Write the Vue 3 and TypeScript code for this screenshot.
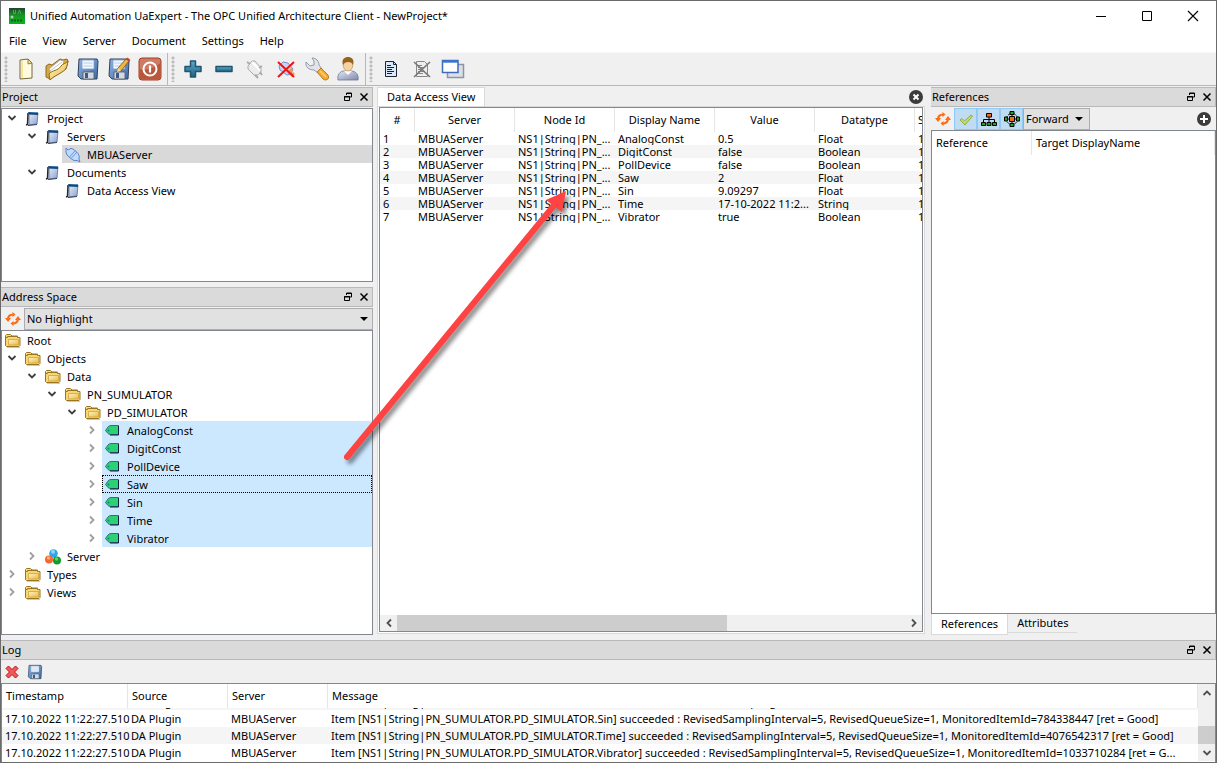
<script setup lang="ts">
import { onMounted, ref } from 'vue'

interface TreeNode {
  label: string
  level: number
  icon: string
  state?: 'open' | 'closed'
  mark?: 'grey' | 'blue'
  focus?: boolean
}

const menus = ['File', 'View', 'Server', 'Document', 'Settings', 'Help']

const toolbars = [
  [
    { id: 'new', label: 'New project' },
    { id: 'open', label: 'Open project' },
    { id: 'save', label: 'Save project' },
    { id: 'saveas', label: 'Save project as' },
    { id: 'power', label: 'Exit' },
  ],
  [
    { id: 'plus', label: 'Add server' },
    { id: 'minus', label: 'Remove server' },
    { id: 'plug', label: 'Connect server' },
    { id: 'unplug', label: 'Disconnect server' },
    { id: 'wrench', label: 'Server properties' },
    { id: 'user', label: 'Change user' },
  ],
  [
    { id: 'doc', label: 'Add document' },
    { id: 'nodoc', label: 'Remove document' },
    { id: 'windows', label: 'Windows' },
  ],
]

const projectTree: TreeNode[] = [
  { label: 'Project', level: 1, icon: 'box', state: 'open' },
  { label: 'Servers', level: 2, icon: 'box', state: 'open' },
  { label: 'MBUAServer', level: 3, icon: 'link', mark: 'grey' },
  { label: 'Documents', level: 2, icon: 'box', state: 'open' },
  { label: 'Data Access View', level: 3, icon: 'box' },
]

const tags = ['AnalogConst', 'DigitConst', 'PollDevice', 'Saw', 'Sin', 'Time', 'Vibrator']

const addressTree: TreeNode[] = [
  { label: 'Root', level: 0, icon: 'folder' },
  { label: 'Objects', level: 1, icon: 'folder', state: 'open' },
  { label: 'Data', level: 2, icon: 'folder', state: 'open' },
  { label: 'PN_SUMULATOR', level: 3, icon: 'folder', state: 'open' },
  { label: 'PD_SIMULATOR', level: 4, icon: 'folder', state: 'open' },
  ...tags.map((label): TreeNode => ({
    label, level: 5, icon: 'tag', state: 'closed', mark: 'blue', focus: label === 'Saw',
  })),
  { label: 'Server', level: 2, icon: 'balls', state: 'closed' },
  { label: 'Types', level: 1, icon: 'folder', state: 'closed' },
  { label: 'Views', level: 1, icon: 'folder', state: 'closed' },
]

const values = ['0.5', 'false', 'false', '2', '9.09297', '17-10-2022 11:2...', 'true']
const types = ['Float', 'Boolean', 'Boolean', 'Float', 'Float', 'String', 'Boolean']
const dataHead = ['#', 'Server', 'Node Id', 'Display Name', 'Value', 'Datatype', 'S']
const dataRows = tags.map((tag, i) => [
  String(i + 1), 'MBUAServer', 'NS1|String|PN_...', tag, values[i], types[i], '1',
])

const logRows = [
  ['Saw', '2075865447 [ret = Good]'],
  ['Sin', '784338447 [ret = Good]'],
  ['Time', '4076542317 [ret = Good]'],
  ['Vibrator', '1033710284 [ret = G...'],
].map(([name, tail]) => [
  '17.10.2022 11:22:27.510', 'DA Plugin', 'MBUAServer',
  `Item [NS1|String|PN_SUMULATOR.PD_SIMULATOR.${name}] succeeded : RevisedSamplingInterval=5, RevisedQueueSize=1, MonitoredItemId=${tail}`,
])

const highlight = ref('No Highlight')
const direction = ref('Forward')
const logView = ref<HTMLElement | null>(null)

onMounted(() => {
  if (logView.value) logView.value.scrollTop = logView.value.scrollHeight
})
</script>

<template>
  <div class="window">
    <svg class="defs" aria-hidden="true">
      <defs>
        <linearGradient id="g-gold" x1="0" y1="0" x2="1" y2="1"><stop offset="0" stop-color="#fff6c4" /><stop offset="1" stop-color="#e9b94a" /></linearGradient>
        <linearGradient id="g-blue" x1="0" y1="0" x2="1" y2="1"><stop offset="0" stop-color="#8fb4e0" /><stop offset="1" stop-color="#3f6ba8" /></linearGradient>
        <linearGradient id="g-box" x1="0" y1="0" x2="1" y2="1"><stop offset="0" stop-color="#e4ebf8" /><stop offset="1" stop-color="#8ba2d2" /></linearGradient>
        <linearGradient id="g-teal" x1="0" y1="0" x2="0" y2="1"><stop offset="0" stop-color="#62a8c8" /><stop offset="1" stop-color="#1d6285" /></linearGradient>
        <linearGradient id="g-green" x1="0" y1="0" x2="0" y2="1"><stop offset="0" stop-color="#23452b" /><stop offset=".5" stop-color="#159a25" /><stop offset="1" stop-color="#08b41b" /></linearGradient>
        <linearGradient id="g-body" x1="0" y1="0" x2="1" y2="1"><stop offset="0" stop-color="#e2e6f1" /><stop offset="1" stop-color="#7f89ad" /></linearGradient>
      </defs>
      <symbol id="i-new" viewBox="0 0 24 24">
        <path d="M6 3 14 2l4 4v15L6 22z" fill="#fffbe0" stroke="#75663a" />
        <path d="M7 4v17h2V4z" fill="#f7e79b" /><path d="M14 2v5l4-1z" fill="#f6df8d" stroke="#75663a" stroke-width=".8" />
      </symbol>
      <symbol id="i-open" viewBox="0 0 24 24">
        <path d="M1 9 4 7l3 1 8-6 3 1 4-1 1 2-2 8L5 22 1 20z" fill="#d7a83e" stroke="#8c6a1d" />
        <path d="M4 12 15 3l4 1-2 7-11 5z" fill="#fff" stroke="#999" stroke-width=".7" /><path d="m5 14 12-9" stroke="#aaa" stroke-width=".7" />
        <path d="M4 17c3-4 9-3 12-8 2-3 5-2 7-5-1 6-2 9-6 11-4 3-8 4-12 8z" fill="url(#g-gold)" stroke="#8c6a1d" />
      </symbol>
      <symbol id="i-save" viewBox="0 0 24 24">
        <path d="M3 2h18l1 2-1 18H5l-3-3z" fill="url(#g-blue)" stroke="#2f4259" />
        <path d="M6 3h12v9H6z" fill="#f2f7fd" stroke="#7da0c8" stroke-width=".8" /><path d="M7.500 6h9M7.500 9h9" stroke="#b9cde5" />
        <path d="M7 15h11v7H7z" fill="#d5d9df" stroke="#46566d" stroke-width=".8" /><path d="M9 16h3v5H9z" fill="#3c5a85" />
      </symbol>
      <symbol id="i-saveas" viewBox="0 0 24 24">
        <use href="#i-save" width="24" height="24" />
        <path d="m10 15 1-4 8-9 3 2-8 10z" fill="#f5b53a" stroke="#694f25" stroke-width=".8" /><path d="m19 2 1.500-1.500 3 2.500L22 4.500z" fill="#d33f2a" /><path d="m10 15 1-4 3 3z" fill="#f5dfb4" />
      </symbol>
      <symbol id="i-power" viewBox="0 0 24 24">
        <rect x="1" y="1" width="22" height="22" rx="3" fill="#cd7b63" stroke="#a43f29" />
        <path d="M1.500 12C9 14 16 11 22.500 6v14q0 2-2.500 2H4q-2.500 0-2.500-2z" fill="#b9563b" />
        <circle cx="12" cy="12" r="6.500" fill="none" stroke="#fff" stroke-width="2" /><path d="M12 8.500v7" stroke="#fff" stroke-width="2.200" />
      </symbol>
      <symbol id="i-plus" viewBox="0 0 24 24"><path d="M9.500 4h5v5.500H20v5h-5.500V20h-5v-5.500H4v-5h5.500z" fill="url(#g-teal)" stroke="#1f5672" stroke-width="1.500" stroke-linejoin="round" /></symbol>
      <symbol id="i-minus" viewBox="0 0 24 24"><path d="M4 9.500h16v5H4z" fill="url(#g-teal)" stroke="#1f5672" stroke-width="1.500" stroke-linejoin="round" /></symbol>
      <symbol id="i-plug" viewBox="0 0 24 24">
        <path d="m5 9 4-5h3l6 7v4l-3 3h-4l-6-6z" fill="#ececec" stroke="#aaa" /><path d="m9 5 8 8" stroke="#fff" stroke-width="2" />
        <path d="m16 11 3-2m-7 9 3 3M4 5l3 2M17 15l2 3" stroke="#aaa" stroke-width="2" />
      </symbol>
      <symbol id="i-unplug" viewBox="0 0 24 24">
        <path d="m5 9 4-4 5 1 5 6-2 5-4 1-7-5z" fill="#c9d4f4" stroke="#7b8ccc" /><path d="m14 16 4-4m-1 7 3-3" stroke="#f29b2a" stroke-width="2.500" />
        <path d="M4 5 20 20M20 5 4 20" stroke="#f2120d" stroke-width="2" />
      </symbol>
      <symbol id="i-wrench" viewBox="0 0 24 24">
        <path d="M7 1c4 0 7 3 7 7l3 4-4 4-4-3C4 13 0 10 1 5l4 4 4-1V4z" fill="#e1e5eb" stroke="#7d8794" stroke-width=".8" />
        <path d="m12 15 4-4 7 7q2 4-2 5-2 0-3-1z" fill="#f7a92b" stroke="#a66a16" stroke-width=".8" /><path d="m15 14 6 6" stroke="#ffd27a" stroke-width="1.500" />
      </symbol>
      <symbol id="i-user" viewBox="0 0 24 24">
        <path d="M2 23c-1-5 2-9 6-9h7c5 0 8 4 7 9z" fill="url(#g-body)" stroke="#6d7696" stroke-width=".8" /><path d="m8 14 4 4 4-4z" fill="#fff" />
        <ellipse cx="12" cy="8" rx="4.800" ry="6" fill="#f7d3a1" stroke="#b5843d" stroke-width=".6" /><path d="M7 8C5 2 9 0 12 0s7 2 5 8c-1-2-2-3-5-3-2 0-4 1-5 3z" fill="#95631e" />
      </symbol>
      <symbol id="i-doc" viewBox="0 0 24 24">
        <path d="M6.500 4.500h8l3 3v12h-11z" fill="#d9e8fb" stroke="#1d2733" /><path d="M14.500 4.500v3h3" fill="none" stroke="#1d2733" />
        <path d="M8 8.500h4m-4 2h7m-7 2h5m-5 2h7m-7 2h5" stroke="#17202c" />
      </symbol>
      <symbol id="i-nodoc" viewBox="0 0 24 24">
        <path d="M6.500 4.500h8l3 3v12h-11z" fill="#eee" stroke="#888" /><path d="M8 8.500h4m-4 2h7m-7 2h5m-5 2h7m-7 2h5" stroke="#888" />
        <path d="m4 5 16 15M20 5 4 20" stroke="#777" stroke-width="1.600" />
      </symbol>
      <symbol id="i-windows" viewBox="0 0 24 24">
        <path d="M6.500 7.500h16v13h-16z" fill="#dcdfe7" stroke="#8d94a6" stroke-width="1.500" />
        <path d="M1.500 3.500h15.500v12H1.500z" fill="#fff" stroke="#3f6cb9" stroke-width="1.500" /><path d="M1.500 4.500h15.500" stroke="#3a75d2" stroke-width="2.400" />
      </symbol>
      <symbol id="i-box" viewBox="0 0 16 16">
        <path d="m4 3 9-1-1 11-8 1z" fill="url(#g-box)" stroke="#5b6d92" stroke-width=".8" />
        <path d="m3 1 10 .5V4L4 3.500z" fill="#0d4a80" /><path d="m3 2-.5 11.500L1 14" fill="none" stroke="#1c2736" stroke-width="1.500" /><path d="m3 14.500 9-1" stroke="#33415c" />
      </symbol>
      <symbol id="i-link" viewBox="0 0 16 16">
        <path d="m1 1 2 2q3-3 6-.5l4 4q2 3 1 5.500l1 3-3-1.500q-3 1-5.500-1.500L2 8Q.5 5.500 1 1z" fill="#c2dafc" stroke="#5585cf" /><path d="m4.500 10 6-6.500M6 11.500 12 5" stroke="#5585cf" stroke-width=".8" />
      </symbol>
      <symbol id="i-folder" viewBox="0 0 16 16">
        <path d="M.5 12.500v-10l1-1h4l1.500 1.500h5.500v2" fill="#f7df86" stroke="#9a751f" />
        <path d="M.5 12.500v-8h2v-1h10v1h2.500v8l-1 1H1.500z" fill="#f6d774" stroke="#9a751f" /><path d="M3.500 6.500h10v5.500h-10z" fill="url(#g-gold)" stroke="#d0a23b" stroke-width=".8" />
        <path d="M2 14.500h13" stroke="#bbb" stroke-width=".8" />
      </symbol>
      <symbol id="i-tag" viewBox="0 0 16 16">
        <path d="M.5 7.500 3 4q1-1.500 3-1.500h7.500v9H6q-2 0-3-1z" fill="#2bd274" stroke="#3b6a86" /><path d="M13.500 3v9H5" fill="none" stroke="#0d1f43" /><circle cx="3.500" cy="7.500" r="1" fill="#127f8a" />
      </symbol>
      <symbol id="i-balls" viewBox="0 0 16 16">
        <circle cx="8.500" cy="4.500" r="4.300" fill="#2fa4ea" /><circle cx="8" cy="2.800" r="2" fill="#8cd6fb" />
        <circle cx="4" cy="10.500" r="4" fill="#ef6a2d" /><circle cx="3.500" cy="9" r="1.700" fill="#f9a983" />
        <circle cx="12" cy="11.500" r="4" fill="#149a2c" /><circle cx="11.500" cy="10" r="1.700" fill="#5ed067" />
      </symbol>
      <symbol id="i-refresh" viewBox="0 0 16 16">
        <path d="M3 8.500C3 5 5.500 3.500 8.500 3.500M13 7.500C13 11 10.500 12.500 7.500 12.500" fill="none" stroke="#ff6a13" stroke-width="2.200" />
        <path d="m0 7 3 4L6 7zM16 9l-3-4-3 4zM7.500 1v5l3-2.500zM8.500 10v5l-3-2.500z" fill="#ff6a13" />
      </symbol>
      <symbol id="i-check" viewBox="0 0 16 16"><path d="m2 9 2-1.500 2.500 2.500L13 4l1.500 1L7 14z" fill="#c4dd5b" stroke="#83a03a" stroke-width=".8" /></symbol>
      <symbol id="i-hier" viewBox="0 0 16 16">
        <path d="M8 6v5M2.500 11V8.500h11V11" fill="none" stroke="#000" /><path d="M5.500 2.500h5v3.500h-5z" fill="#f56a1c" stroke="#000" />
        <path d="M.5 11.500h4v3h-4zM6 11.500h4v3H6zM11.500 11.500h4v3h-4z" fill="#17a81e" stroke="#000" />
      </symbol>
      <symbol id="i-net" viewBox="0 0 16 16">
        <circle cx="8" cy="8" r="5.500" fill="none" stroke="#000" stroke-dasharray="2 1" /><path d="M8 1v14M1 8h14" stroke="#000" />
        <path d="M5.500 5.500h5v5h-5z" fill="#f56a1c" stroke="#000" />
        <path d="M6 .5h4v3H6zM6 12.500h4v3H6zM.5 6h3v4h-3zM12.500 6h3v4h-3z" fill="#17a81e" stroke="#000" />
      </symbol>
      <symbol id="i-clear" viewBox="0 0 16 16"><path d="m4.500 2 3.500 3.500L11.500 2 14 4.500 10.500 8l3.500 3.500-2.500 2.500L8 10.500 4.500 14 2 11.500 5.500 8 2 4.500z" fill="#f4585a" stroke="#b51217" /></symbol>
      <symbol id="i-float" viewBox="0 0 10 10"><path d="M3.500 3V1h5v4H6.500M3 1.500h6M1.500 4.500h5v4h-5zM1 5h6" fill="none" stroke="#000" /></symbol>
      <symbol id="i-close" viewBox="0 0 10 10"><path d="m1.500 1.500 7 7m0-7-7 7" stroke="#000" stroke-width="1.500" /></symbol>
      <symbol id="i-chev" viewBox="0 0 10 10"><path d="M1.500 3 5 6.500 8.500 3" fill="none" stroke="currentColor" stroke-width="1.800" /></symbol>
      <symbol id="i-app" viewBox="0 0 16 16">
        <path d="M0 0h16v16H0z" fill="url(#g-green)" /><path d="M4.500 2v3.500h2V2M9 6l1.500-4L12 6" fill="none" stroke="#35b84a" />
        <path d="M2 12.500h12" stroke="#0a6513" stroke-width="2" stroke-dasharray="2 1" /><circle cx="3" cy="9" r="1.500" fill="#b9c9bb" />
      </symbol>
    </svg>

    <header class="titlebar">
      <svg class="s16"><use href="#i-app" /></svg>
      <h1>Unified Automation UaExpert - The OPC Unified Architecture Client - NewProject*</h1>
      <div class="winbtns">
        <button aria-label="Minimize"><svg viewBox="0 0 12 12"><path d="M1 6.500h10" stroke="#000" /></svg></button>
        <button aria-label="Maximize"><svg viewBox="0 0 12 12"><path d="M1.500 1.500h9v9h-9z" fill="none" stroke="#000" /></svg></button>
        <button aria-label="Close"><svg viewBox="0 0 12 12"><path d="m1 1 10 10M11 1 1 11" stroke="#000" stroke-width="1.100" /></svg></button>
      </div>
    </header>

    <nav class="menubar"><button v-for="m in menus" :key="m">{{ m }}</button></nav>

    <div class="toolbars">
      <div v-for="(bar, i) in toolbars" :key="i" class="toolbar">
        <span class="grip"></span>
        <button v-for="t in bar" :key="t.id" :aria-label="t.label"><svg class="s24"><use :href="'#i-' + t.id" /></svg></button>
      </div>
    </div>

    <main class="work">
      <div class="left">
        <section class="dock project">
          <div class="docktitle"><h2>Project</h2>
            <button aria-label="Float"><svg class="s10"><use href="#i-float" /></svg></button>
            <button aria-label="Close"><svg class="s10"><use href="#i-close" /></svg></button>
          </div>
          <ul class="tree">
            <li v-for="n in projectTree" :key="n.label">
              <span class="indent" :class="[n.state, 'l' + n.level]"><svg v-if="n.state" class="s10"><use href="#i-chev" /></svg></span>
              <span class="node" :class="n.mark"><svg class="s16"><use :href="'#i-' + n.icon" /></svg>{{ n.label }}</span>
            </li>
          </ul>
        </section>
        <section class="dock address">
          <div class="docktitle"><h2>Address Space</h2>
            <button aria-label="Float"><svg class="s10"><use href="#i-float" /></svg></button>
            <button aria-label="Close"><svg class="s10"><use href="#i-close" /></svg></button>
          </div>
          <div class="filter">
            <button class="refresh" aria-label="Refresh"><svg class="s16"><use href="#i-refresh" /></svg></button>
            <span class="combo"><select v-model="highlight" aria-label="Highlight"><option>No Highlight</option></select></span>
          </div>
          <ul class="tree">
            <li v-for="n in addressTree" :key="n.label">
              <span class="indent" :class="[n.state, 'l' + n.level]"><svg v-if="n.state" class="s10"><use href="#i-chev" /></svg></span>
              <span class="node" :class="[n.mark, { focus: n.focus }]"><svg class="s16"><use :href="'#i-' + n.icon" /></svg>{{ n.label }}</span>
            </li>
          </ul>
        </section>
      </div>

      <section class="centre">
        <div class="tabs">
          <button class="tab">Data Access View</button>
          <button class="round" aria-label="Close document"><svg viewBox="0 0 14 14"><circle cx="7" cy="7" r="7" fill="#3c3c3c" /><path d="m4.500 4.500 5 5m0-5-5 5" stroke="#fff" stroke-width="2" /></svg></button>
        </div>
        <div class="pane">
          <div class="sheet">
            <div class="grid">
              <table>
                <colgroup><col class="c35"><col v-for="k in 6" :key="k" class="c100"></colgroup>
                <thead><tr><th v-for="(h, i) in dataHead" :key="i">{{ h }}</th></tr></thead>
                <tbody><tr v-for="row in dataRows" :key="row[0]"><td v-for="(c, i) in row" :key="i"><div>{{ c }}</div></td></tr></tbody>
              </table>
            </div>
            <div class="hscroll">
              <button class="toleft" aria-label="Scroll left"><svg class="s10"><use href="#i-chev" /></svg></button>
              <div class="track"><div class="thumb"></div></div>
              <button class="toright" aria-label="Scroll right"><svg class="s10"><use href="#i-chev" /></svg></button>
            </div>
          </div>
        </div>
      </section>

      <section class="right">
        <div class="docktitle"><h2>References</h2>
          <button aria-label="Float"><svg class="s10"><use href="#i-float" /></svg></button>
          <button aria-label="Close"><svg class="s10"><use href="#i-close" /></svg></button>
        </div>
        <div class="reftools">
          <button class="refresh" aria-label="Refresh"><svg class="s16"><use href="#i-refresh" /></svg></button>
          <button class="toggle" aria-label="Apply"><svg class="s16"><use href="#i-check" /></svg></button>
          <button class="toggle" aria-label="Hierarchical"><svg class="s16"><use href="#i-hier" /></svg></button>
          <button class="toggle" aria-label="Non-hierarchical"><svg class="s16"><use href="#i-net" /></svg></button>
          <span class="combo narrow"><select v-model="direction" aria-label="Direction"><option>Forward</option></select></span>
          <button class="round" aria-label="Add"><svg viewBox="0 0 14 14"><circle cx="7" cy="7" r="7" fill="#3c3c3c" /><path d="M7 3v8M3 7h8" stroke="#fff" stroke-width="2" /></svg></button>
        </div>
        <div class="reflist">
          <table><thead><tr><th class="refcol">Reference</th><th>Target DisplayName</th></tr></thead></table>
        </div>
        <div class="bottomtabs"><button class="on">References</button><button>Attributes</button></div>
      </section>
    </main>

    <section class="log">
      <div class="docktitle"><h2>Log</h2>
        <button aria-label="Float"><svg class="s10"><use href="#i-float" /></svg></button>
        <button aria-label="Close"><svg class="s10"><use href="#i-close" /></svg></button>
      </div>
      <div class="logtools">
        <button aria-label="Clear log"><svg class="s16"><use href="#i-clear" /></svg></button>
        <button aria-label="Save log"><svg class="s16"><use href="#i-save" /></svg></button>
      </div>
      <div class="logbody">
        <div ref="logView" class="logview">
          <table>
            <colgroup><col class="c126"><col class="c100"><col class="c100"><col></colgroup>
            <thead><tr><th>Timestamp</th><th>Source</th><th>Server</th><th>Message</th></tr></thead>
            <tbody><tr v-for="(row, r) in logRows" :key="r"><td v-for="(c, i) in row" :key="i">{{ c }}</td></tr></tbody>
          </table>
        </div>
        <div class="vscroll">
          <button class="up" aria-label="Scroll up"><svg class="s10"><use href="#i-chev" /></svg></button>
          <div class="track"><div class="thumb"></div></div>
          <button aria-label="Scroll down"><svg class="s10"><use href="#i-chev" /></svg></button>
        </div>
      </div>
    </section>

    <svg class="arrow" width="260" height="300" viewBox="330 170 260 300" aria-hidden="true">
      <path d="M347 457 556 203" stroke="#ff4343" stroke-width="6" stroke-linecap="round" />
      <path d="m566 191-20 9 16 12z" fill="#ff4343" />
    </svg>
  </div>
</template>

<style>
html, body { background: #f0f0f0; }
</style>

<style scoped>
.window { position: relative; box-sizing: border-box; height: 100vh; min-height: 600px; display: flex; flex-direction: column; border: 1px solid #6b6b6b; background: #f0f0f0; color: #000; font: 11px/18px "Noto Sans", "Open Sans", sans-serif; overflow: hidden; }
.window * { box-sizing: border-box; }
.defs { position: absolute; width: 0; height: 0; }
button { display: flex; align-items: center; justify-content: center; margin: 0; padding: 0; border: 0; background: none; color: inherit; font: inherit; }
svg { display: block; flex: none; }
.s10 { width: 10px; height: 10px; }
.s16 { width: 16px; height: 16px; }
.s24 { width: 24px; height: 24px; }
h1, h2 { margin: 0; font: inherit; white-space: nowrap; }
table { border-collapse: separate; border-spacing: 0; }
th, td { padding: 0; font-weight: 400; text-align: left; white-space: nowrap; }

.titlebar { display: flex; align-items: center; flex: none; height: 29px; padding-left: 8px; gap: 5px; background: #fff; }
.winbtns { display: flex; margin-left: auto; }
.winbtns button { width: 46px; height: 29px; }
.winbtns svg { width: 12px; height: 12px; }
.menubar { display: flex; flex: none; height: 22px; padding-left: 8px; gap: 16px; background: #fff; }

.toolbars { display: flex; flex: none; height: 34px; border-top: 1px solid #f8f8f8; border-bottom: 1px solid #b8b8b8; }
.toolbar { display: flex; padding-right: 2px; }
.toolbar:not(:last-child) { border-right: 1px solid #b8b8b8; }
.toolbar button { width: 31px; }
.grip { width: 9px; margin: 3px 0; background: radial-gradient(circle at 5px 2px, #bdbdbd 1px, transparent 2px) 0 0 / 9px 4px; }

.work { display: grid; grid-template-columns: 372px minmax(0, 1fr) 285px; flex: 1; min-height: 0; padding-top: 1px; }
.left, .dock, .centre, .right { display: flex; flex-direction: column; min-height: 0; min-width: 0; }
.left { gap: 5px; padding-bottom: 5px; }
.project { flex: 195; }
.address { flex: 348; }
.docktitle { display: flex; align-items: center; flex: none; height: 20px; padding-left: 1px; background: #dadada; border: 1px solid #b9b9b9; border-left: 0; }
.docktitle h2 { flex: 1; }
.docktitle button { width: 16px; height: 16px; }
.tree { flex: 1; min-height: 0; margin: 1px 0 0; padding: 0; list-style: none; background: #fff; border: 1px solid #828790; overflow: hidden; }
.filter + .tree { margin-top: 0; }
.tree li { display: flex; height: 18px; }
.indent { display: flex; flex: none; align-items: center; justify-content: flex-end; padding-right: 5px; color: #404040; }
.indent.closed { color: #a0a0a0; }
.indent.closed svg { transform: rotate(-90deg); }
.l0 { width: 0; padding: 0; }
.l1 { width: 20px; }
.l2 { width: 40px; }
.l3 { width: 60px; }
.l4 { width: 80px; }
.l5 { width: 100px; }
.node { display: flex; flex: 1; align-items: center; gap: 6px; padding: 2px 0 0 3px; white-space: nowrap; }
.grey { background: #d9d9d9; }
.blue { background: #cce8ff; }
.focus { outline: 1px dotted #000; outline-offset: -1px; }
.filter { display: flex; flex: none; height: 23px; padding-top: 1px; }
.refresh { width: 23px; }
.combo { position: relative; display: flex; flex: 1; }
.combo select { flex: 1; height: 22px; padding: 0 20px 0 2px; border: 1px solid #adadad; border-radius: 0; background: #e1e1e1; color: #000; font: inherit; appearance: none; }
.combo::after { content: ""; position: absolute; right: 5px; top: 9px; border: 4px solid transparent; border-top-color: #000; border-bottom: 0; pointer-events: none; }

.centre { padding: 0 6px 6px 4px; }
.tabs { display: flex; flex: none; align-items: center; justify-content: space-between; height: 19px; padding-right: 2px; }
.tab { height: 19px; padding: 0 9px; background: #fff; border: 1px solid #d9d9d9; border-bottom: 0; }
.round { width: 14px; }
.round svg { width: 14px; height: 14px; }
.pane { display: flex; flex: 1; min-height: 0; padding: 0 1px 1px; border: 1px solid #d9d9d9; background: #fff; }
.sheet { display: flex; flex: 1; flex-direction: column; min-width: 0; border: 1px solid #828790; }
.grid { flex: 1; overflow: hidden; }
.grid table { width: 635px; table-layout: fixed; }
.c35 { width: 35px; }
.c100 { width: 100px; }
.c126 { width: 126px; }
.grid th { height: 24px; border-right: 1px solid #e5e5e5; text-align: center; }
.grid th:last-child { padding-left: 3px; text-align: left; }
.grid td { height: 13px; padding-left: 3px; }
.grid td div { height: 13px; line-height: 14px; overflow: hidden; }
.grid tbody tr:nth-child(even), .logview tbody tr:nth-child(odd) { background: #f5f5f5; }
.hscroll { display: flex; flex: none; height: 16px; background: #f0f0f0; color: #505050; }
.hscroll button { width: 17px; }
.toleft svg { transform: rotate(90deg); }
.toright svg { transform: rotate(-90deg); }
.track { flex: 1; }
.thumb { background: #cdcdcd; }
.hscroll .thumb { width: 65%; height: 100%; }

.reftools { display: flex; flex: none; height: 23px; padding: 1px 5px 0 0; }
.toggle { width: 23px; background: #c0dcf3; border: 1px solid #90c8f6; }
.narrow { flex: none; width: 65px; }
.reftools .round { margin-left: auto; }
.reflist { flex: 1; min-height: 0; background: #fff; border: 1px solid #828790; }
.reflist table { width: 100%; }
.reflist th { height: 24px; padding-left: 4px; border-right: 1px solid #e5e5e5; }
.refcol { width: 100px; }
.bottomtabs { display: flex; flex: none; align-items: flex-start; height: 26px; }
.bottomtabs button { height: 19px; padding: 0 9px; border-bottom: 1px solid #d9d9d9; }
.bottomtabs .on { height: 21px; background: #fff; border: 1px solid #d9d9d9; border-top: 0; }

.log { display: flex; flex: none; flex-direction: column; }
.logtools { display: flex; height: 23px; padding-left: 3px; gap: 7px; }
.logbody { display: flex; padding-bottom: 1px; border: 1px solid #828790; border-bottom: 0; background: #fff; }
.logview { flex: 1; min-width: 0; height: 77px; overflow: hidden; }
.logview table { width: 100%; table-layout: fixed; }
.logview th { position: sticky; top: 0; height: 24px; padding-left: 4px; background: #fff; border-right: 1px solid #e5e5e5; }
.logview td { height: 17px; line-height: 17px; padding-left: 3px; }
.vscroll { display: flex; flex-direction: column; width: 17px; background: #f0f0f0; color: #505050; }
.vscroll button { height: 17px; }
.up svg { transform: rotate(180deg); }
.vscroll .track { display: flex; flex-direction: column; justify-content: flex-end; }
.vscroll .thumb { height: 18px; }

.arrow { position: absolute; left: 329px; top: 169px; pointer-events: none; filter: drop-shadow(3px 4px 2px rgba(0, 0, 0, .45)); }
</style>
